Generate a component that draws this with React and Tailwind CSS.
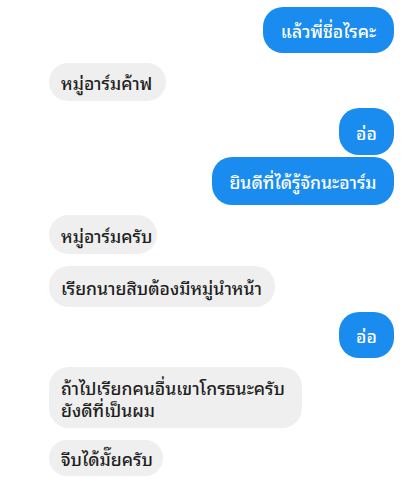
const messages = [
  { side: 'me', text: 'แล้วพี่ชื่อไรคะ', w: 'w-[131px]', h: 'h-[46px]', mt: 'mt-[7px]' },
  { side: 'them', text: 'หมู่อาร์มค้าฟ', w: 'w-[117px]', h: 'h-[38px]', mt: 'mt-[10px]' },
  { side: 'me', text: 'อ่อ', w: 'w-[55px]', h: 'h-[47px]', mt: 'mt-[7px]' },
  { side: 'me', text: 'ยินดีที่ได้รู้จักนะอาร์ม', w: 'w-[182px]', h: 'h-[48px]', mt: 'mt-[2px]' },
  { side: 'them', text: 'หมู่อาร์มครับ', w: 'w-[108px]', h: 'h-[39px]', mt: 'mt-[10px]' },
  { side: 'them', text: 'เรียกนายสิบต้องมีหมู่นำหน้า', w: 'w-[226px]', h: 'h-[41px]', mt: 'mt-[12px]' },
  { side: 'me', text: 'อ่อ', w: 'w-[55px]', h: 'h-[46px]', mt: 'mt-[5px]' },
  { side: 'them', text: ['ถ้าไปเรียกคนอื่นเขาโกรธนะครับ', 'ยังดีที่เป็นผม'], w: 'w-[253px]', h: 'h-[61px]', mt: 'mt-[9px]' },
  { side: 'them', text: 'จีบได้มั๊ยครับ', w: 'w-[114px]', h: 'h-[36px]', mt: 'mt-[12px]' },
]

function Bubble({ m }) {
  const mine = m.side === 'me'
  return (
    <div className={`flex ${mine ? 'justify-end' : 'justify-start'} ${m.mt}`}>
      <div
        className={`${m.w} ${m.h} flex flex-col justify-center rounded-[20px] ${
          mine ? 'items-center bg-[#1a8cf0] text-white' : 'items-start bg-[#efefef] px-[12px] text-[#1e1e1e]'
        }`}
      >
        {Array.isArray(m.text) ? (
          <p className="whitespace-nowrap leading-[22px]">
            {m.text[0]}
            <br />
            {m.text[1]}
          </p>
        ) : (
          <span className="whitespace-nowrap leading-[22px]">{m.text}</span>
        )}
      </div>
    </div>
  )
}

export default function App() {
  return (
    <div className="h-[486px] w-[411px] overflow-hidden bg-white pl-[49px] pr-[17px] font-['Noto_Sans_Thai_Looped','Noto_Sans_Thai','Noto_Sans',sans-serif] text-[17.5px] font-medium">
      {messages.map((m, i) => (
        <Bubble key={i} m={m} />
      ))}
    </div>
  )
}
